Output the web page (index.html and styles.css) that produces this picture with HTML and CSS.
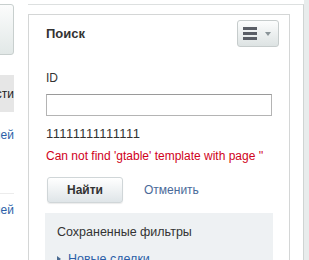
FILE: index.html
```html
<!DOCTYPE html>
<html lang="ru">
<head>
    <meta charset="UTF-8">
    <title>Поиск</title>
    <link rel="stylesheet" href="styles.css">
</head>
<body>
    <!-- Left column (cut off) -->
    <div class="side">
        <div class="side-btn"></div>
        <div class="side-tab">Свойства сделки и настройки ответственности</div>
        <a class="side-link first" href="#">Список сделок и полей</a>
        <div class="side-line"></div>
        <a class="side-link" href="#">Настройка полей</a>
    </div>

    <!-- Search panel -->
    <div class="wrap">
        <div class="panel">
            <div class="panel-head">
                <div class="panel-title">Поиск</div>
                <button class="menu-btn">
                    <svg width="14" height="13" viewBox="0 0 14 13">
                        <rect x="0" y="0" width="14" height="3" fill="#5a5e66"/>
                        <rect x="0" y="5" width="14" height="3" fill="#5a5e66"/>
                        <rect x="0" y="10" width="14" height="3" fill="#5a5e66"/>
                    </svg>
                    <span class="caret"></span>
                </button>
            </div>

            <label class="field-label" for="idField">ID</label>
            <input class="field-input" id="idField" type="text">
            <div class="field-value">11111111111111</div>
            <div class="field-error">Can not find 'gtable' template with page ''</div>

            <div class="actions">
                <button class="find-btn">Найти</button>
                <a class="cancel-link" href="#">Отменить</a>
            </div>

            <div class="saved">
                <div class="saved-title">Сохраненные фильтры</div>
                <a class="saved-item" href="#"><span class="arrow"></span>Новые сделки</a>
            </div>
        </div>
    </div>

    <div class="strip"></div>
</body>
</html>
```

FILE: styles.css
```css
* {
    margin: 0;
    padding: 0;
    box-sizing: border-box;
}

body {
    font-family: "Liberation Sans", Arial, sans-serif;
    font-size: 12px;
    color: #333;
    background: #fff;
    display: flex;
    height: 260px;
    overflow: hidden;
}

/* Left column */
.side {
    width: 14px;
    flex: none;
    display: flex;
    flex-direction: column;
    align-items: flex-end;
}

.side-btn {
    width: 80px;
    height: 51px;
    margin-top: 4px;
    flex: none;
    border: 1px solid #c8cfce;
    border-radius: 3px;
    background: linear-gradient(#fbfcfc, #e2e8e7);
}

.side-tab {
    margin-top: 20px;
    height: 37px;
    flex: none;
    padding-right: 0;
    background: #e6e6e6;
    display: flex;
    align-items: center;
    white-space: nowrap;
    color: #222;
}

.side-link {
    flex: none;
    white-space: nowrap;
    color: #2c5fa8;
    text-decoration: none;
    font-size: 12px;
    line-height: 14px;
}

.side-link.first {
    margin-top: 16px;
}

.side-line {
    flex: none;
    width: 80px;
    height: 1px;
    margin: 51px 0 9px;
    background: #ececec;
}

/* Panel */
.wrap {
    width: 276px;
    flex: none;
    margin-left: 14px;
    margin-top: 4px;
    padding: 9px 13px 0 0;
    border-top: 1px solid #dde0e0;
    border-right: 1px solid #cfd4d3;
}

.panel {
    height: 100%;
    border: 1px solid #d4d6d6;
    border-bottom: none;
    padding: 5px 10px 0 17px;
}

.panel-head {
    display: flex;
    justify-content: space-between;
    align-items: center;
    height: 27px;
}

.panel-title {
    font-size: 13px;
    font-weight: bold;
    color: #333;
}

.menu-btn {
    width: 42px;
    height: 27px;
    border: 1px solid #c6cccc;
    border-radius: 3px;
    background: linear-gradient(#fcfdfd, #dde3e3);
    display: flex;
    align-items: center;
    padding-left: 5px;
    gap: 8px;
}

.caret {
    width: 0;
    height: 0;
    border-left: 3px solid transparent;
    border-right: 3px solid transparent;
    border-top: 4px solid #8a9498;
}

.field-label {
    display: block;
    margin-top: 24px;
    line-height: 14px;
}

.field-input {
    display: block;
    width: 226px;
    height: 22px;
    margin-top: 9px;
    border: 1px solid #b4b4b4;
    border-top-color: #9a9a9a;
    background: #fff;
}

.field-value {
    margin-top: 11px;
    line-height: 14px;
    font-size: 13px;
    letter-spacing: 0.4px;
    color: #333;
}

.field-error {
    margin-top: 8px;
    line-height: 14px;
    color: #d0021b;
}

.actions {
    display: flex;
    align-items: center;
    margin-top: 14px;
    margin-left: 1px;
}

.find-btn {
    width: 76px;
    height: 26px;
    border: 1px solid #d0d6d8;
    border-radius: 3px;
    background: linear-gradient(#ffffff, #dfe5e8);
    box-shadow: 0 1px 1px rgba(0, 0, 0, 0.08);
    font-family: inherit;
    font-size: 12px;
    font-weight: bold;
    color: #333;
}

.cancel-link {
    margin-left: 21px;
    font-size: 12px;
    color: #4a6a99;
    text-decoration: none;
}

.saved {
    margin-top: 10px;
    margin-left: -1px;
    width: 228px;
    height: 60px;
    background: #eef1f3;
    padding: 12px 12px 0;
}

.saved-title {
    font-size: 12.5px;
    line-height: 15px;
    color: #333;
}

.saved-item {
    display: flex;
    align-items: center;
    margin-top: 12px;
    color: #2c5fa8;
    text-decoration: none;
    font-size: 12.5px;
}

.arrow {
    width: 0;
    height: 0;
    margin-right: 7px;
    border-top: 3px solid transparent;
    border-bottom: 3px solid transparent;
    border-left: 4px solid #4a6a90;
}

.strip {
    flex: 1;
    background: #e8ecec;
}
```
